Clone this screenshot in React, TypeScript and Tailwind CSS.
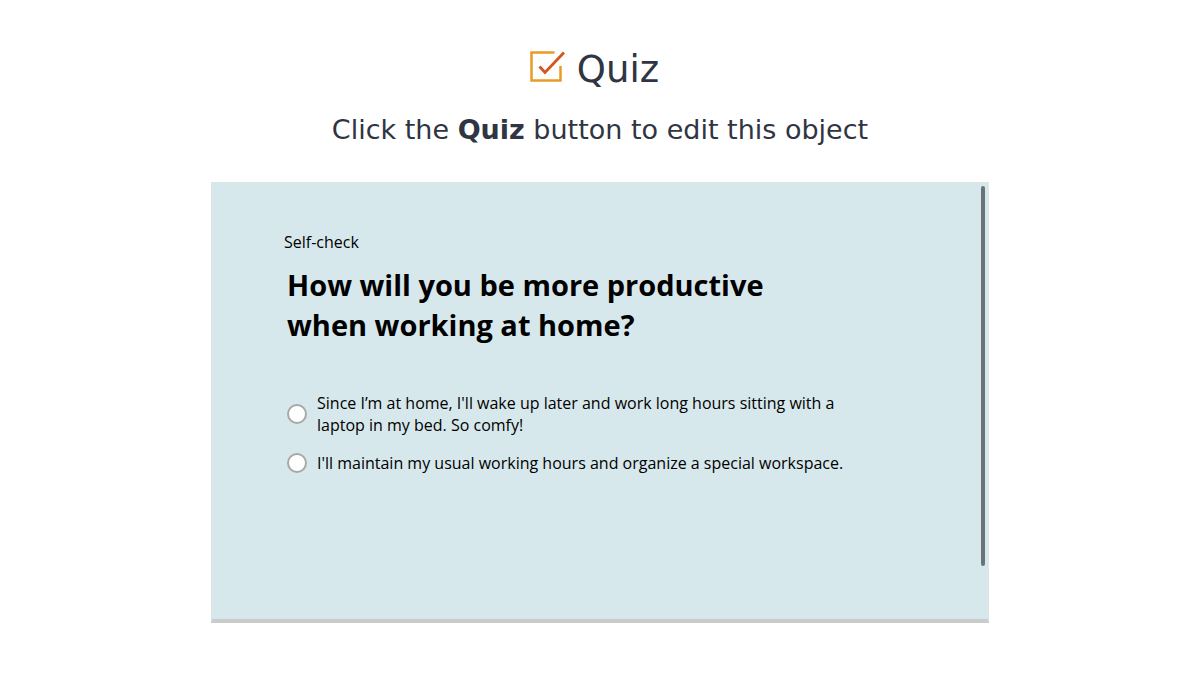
export default function App() {
  const options = [
    "Since I’m at home, I'll wake up later and work long hours sitting with a laptop in my bed. So comfy!",
    "I'll maintain my usual working hours and organize a special workspace.",
  ];
  return (
    <main className="flex min-h-screen flex-col items-center bg-white px-6 pt-[46px] pb-12 font-['DejaVu_Sans',sans-serif] text-[#2f3542]">
      <header className="flex flex-col items-center">
        <h1 className="flex items-start gap-3 pr-3 text-[37px] leading-12">
          <svg viewBox="0 0 36 32" className="mt-1 h-8 w-9" fill="none" aria-hidden="true">
            <path d="M25.5 2.5H2.5V30.5H31.5V16" stroke="#ea9a26" strokeWidth="2.5" />
            <path d="M10.5 16.5L16 22.5L35 2.5" stroke="#d4561c" strokeWidth="2.8" />
          </svg>
          Quiz
        </h1>
        <p className="mt-[18px] text-[27px] leading-9">
          Click the <strong>Quiz</strong> button to edit this object
        </p>
      </header>
      <section className="mt-[34px] flex w-full max-w-[778px] justify-between border border-b-4 border-[#dfe5e6] border-b-[#cacccc] bg-[#d7e8ec] pr-[3px] pt-[3px] font-['Open_Sans',sans-serif] text-black">
        <form className="min-h-[433px] flex-1 pt-11 pl-[72px]">
          <p className="text-base leading-6">Self-check</p>
          <fieldset className="ml-[3px]">
            <legend className="max-w-[520px] pt-[11px] text-[29px] leading-10 font-bold">
              How will you be more productive when working at home?
            </legend>
            <div className="mt-[47px] flex max-w-[570px] flex-col gap-4">
              {options.map((text) => (
                <label key={text} className="flex items-center gap-2.5 text-base leading-[22px]">
                  <input type="radio" name="answer" className="size-5 shrink-0 appearance-none rounded-full border-2 border-[#a8a8a8] bg-white checked:border-[6px]" />
                  <span>{text}</span>
                </label>
              ))}
            </div>
          </fieldset>
        </form>
        <div className="h-[380px] w-1 rounded-full bg-[#687478]" />
      </section>
    </main>
  );
}
